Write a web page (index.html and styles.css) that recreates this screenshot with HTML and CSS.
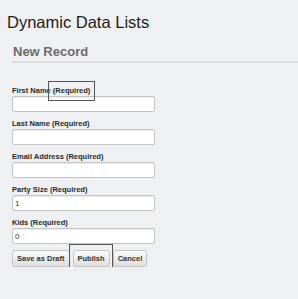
FILE: index.html
```html
<!DOCTYPE html>
<html lang="en">
<head>
    <meta charset="UTF-8">
    <meta name="viewport" content="width=device-width, initial-scale=1.0">
    <title>Dynamic Data Lists</title>
    <link rel="stylesheet" href="styles.css">
</head>
<body>
    <h1 class="app-title">Dynamic Data Lists</h1>

    <div class="portlet">
        <h2 class="portlet-title">New Record</h2>

        <form class="record-form">
            <div class="field">
                <label for="first-name">First Name <span class="marked">(Required)</span></label>
                <input type="text" id="first-name">
            </div>
            <div class="field">
                <label for="last-name">Last Name (Required)</label>
                <input type="text" id="last-name">
            </div>
            <div class="field">
                <label for="email">Email Address (Required)</label>
                <input type="text" id="email">
            </div>
            <div class="field">
                <label for="party-size">Party Size (Required)</label>
                <input type="text" id="party-size" value="1">
            </div>
            <div class="field">
                <label for="kids">Kids (Required)</label>
                <input type="text" id="kids" value="0">
            </div>

            <div class="buttons">
                <button type="button">Save as Draft</button>
                <span class="marked-btn"><button type="button">Publish</button></span>
                <button type="button">Cancel</button>
            </div>
        </form>
    </div>
</body>
</html>
```

FILE: styles.css
```css
body {
    margin: 0;
    background-color: #eff0f2;
    font-family: 'Liberation Sans', Arial, sans-serif;
    color: #222;
}
.app-title {
    margin: 0;
    padding: 12px 0 0 7px;
    font-size: 16.5px;
    font-weight: normal;
    line-height: 20px;
    color: #1c1c1c;
}
.portlet {
    padding: 0 0 0 12px;
}
.portlet-title {
    margin: 12px 0 0 0;
    padding: 0 0 2px 1px;
    font-size: 13px;
    line-height: 15px;
    color: #6b6b6b;
    border-bottom: 2px solid #dcdde0;
}
.record-form {
    display: flex;
    flex-direction: column;
    gap: 7px;
    padding-top: 23px;
}
.field label {
    display: block;
    font-size: 7.5px;
    font-weight: bold;
    line-height: 9px;
    color: #2a2a2a;
    margin-bottom: 1px;
}
.field input {
    display: block;
    box-sizing: border-box;
    width: 143px;
    height: 16px;
    margin: 0;
    padding: 0 2px;
    font-family: inherit;
    font-size: 8px;
    color: #333;
    background-color: #fff;
    border: 1px solid #c4c4c4;
    border-radius: 2px;
    box-shadow: inset 0 1px 1px rgba(0,0,0,0.08);
}
.marked {
    position: relative;
}
.marked::after {
    content: '';
    position: absolute;
    left: -5px;
    right: -5px;
    top: -5px;
    bottom: -6px;
    border: 1px solid #555;
}
.buttons {
    display: flex;
    gap: 3px;
    margin-top: -1px;
}
.buttons button {
    height: 17px;
    padding: 0 4px;
    font-family: inherit;
    font-size: 7.5px;
    font-weight: bold;
    color: #333;
    background: linear-gradient(#fbfbfb, #dedede);
    border: 1px solid #c6c6c6;
    border-radius: 3px;
    box-shadow: 0 1px 1px rgba(0,0,0,0.12);
}
.marked-btn {
    position: relative;
    display: flex;
}
.marked-btn::after {
    content: '';
    position: absolute;
    left: -4px;
    right: -3px;
    top: -6px;
    bottom: -6px;
    border: 1px solid #555;
}
```
